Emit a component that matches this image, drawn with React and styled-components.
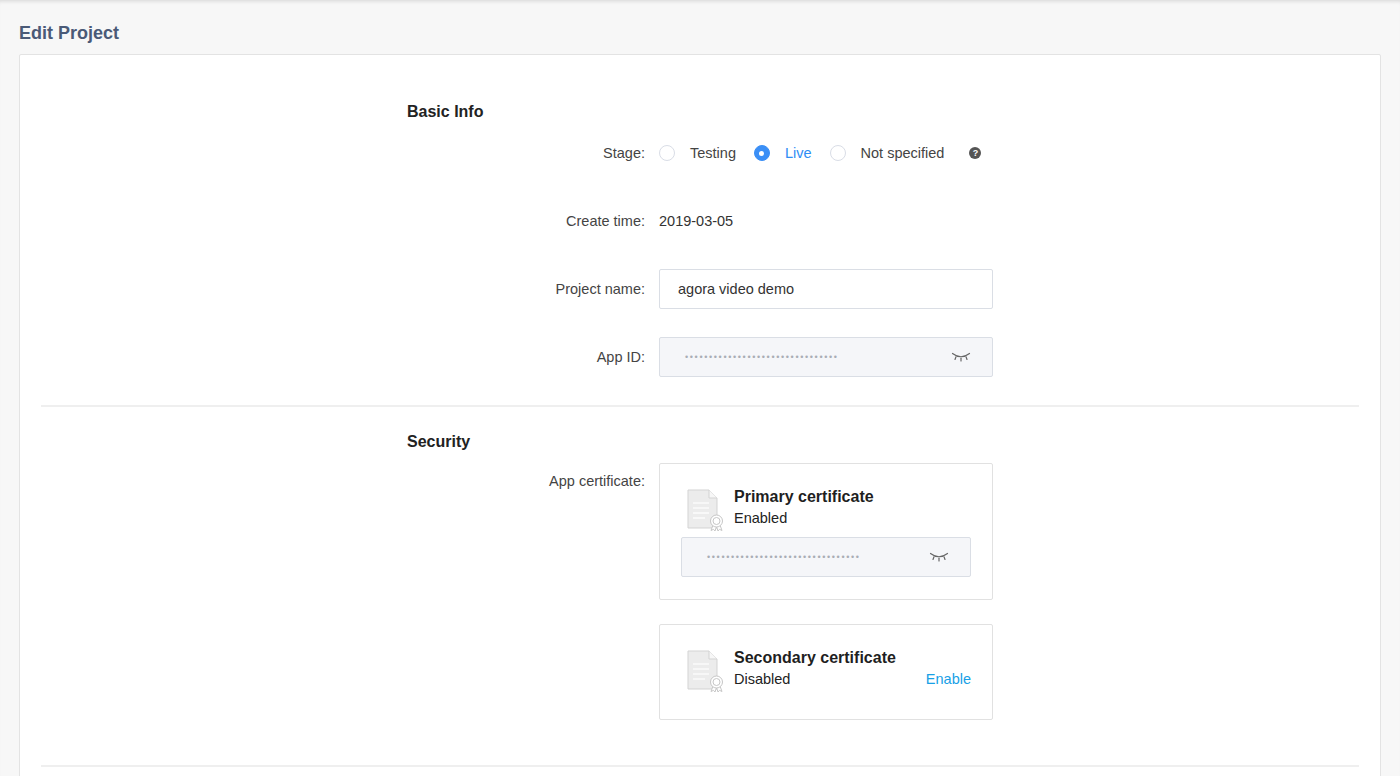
import React from 'react';
import styled, { createGlobalStyle } from 'styled-components';

const GlobalStyle = createGlobalStyle`
  html, body {
    margin: 0;
    padding: 0;
    background: #f7f7f7;
    font-family: "Liberation Sans", Arial, Helvetica, sans-serif;
  }
  * { box-sizing: border-box; }
`;

const Page = styled.div`
  height: 776px;
  overflow: hidden;
  padding: 21px 19px 0;
  background: #f7f7f7;
  box-shadow: inset 0 4px 4px -3px rgba(0, 0, 0, 0.14);
`;

const Title = styled.h1`
  margin: 0 0 9px;
  font-size: 18px;
  line-height: 24px;
  font-weight: 700;
  color: #4a5a77;
`;

const Card = styled.div`
  background: #fff;
  border: 1px solid #e3e3e3;
  border-radius: 2px;
  padding: 0 21px 40px;
  min-height: 760px;
`;

const Section = styled.section`
  padding: ${(p) => p.$top}px 0 ${(p) => p.$bottom}px;
  border-bottom: 2px solid #efefef;
`;

const Form = styled.div`
  width: 586px;
  margin: 0 auto;
`;

const Heading = styled.h2`
  margin: 0 0 9px;
  font-size: 16px;
  line-height: 24px;
  font-weight: 700;
  color: #222;
`;

const Row = styled.div`
  display: flex;
  align-items: ${(p) => (p.$top ? 'flex-start' : 'center')};
  min-height: 40px;
  & + & {
    margin-top: 28px;
  }
`;

const Label = styled.div`
  width: 252px;
  padding-right: 14px;
  text-align: right;
  font-size: 14.5px;
  line-height: ${(p) => (p.$top ? '36px' : '20px')};
  color: #444;
  flex-shrink: 0;
`;

const Value = styled.div`
  width: 334px;
  font-size: 14.5px;
  color: #333;
`;

const RadioGroup = styled.div`
  display: flex;
  align-items: center;
`;

const RadioOption = styled.label`
  display: flex;
  align-items: center;
  gap: 15px;
  margin-right: 18px;
  font-size: 14.5px;
  color: ${(p) => (p.$checked ? '#2f8df5' : '#444')};
  &:last-child { margin-right: 0; }
`;

const RadioDot = styled.span`
  width: 16px;
  height: 16px;
  border-radius: 50%;
  border: 1px solid ${(p) => (p.$checked ? '#3b8ff6' : '#d9dde6')};
  background: ${(p) => (p.$checked ? '#3b8ff6' : '#fff')};
  display: flex;
  align-items: center;
  justify-content: center;
  &::after {
    content: '';
    width: 5px;
    height: 5px;
    border-radius: 50%;
    background: #fff;
    display: ${(p) => (p.$checked ? 'block' : 'none')};
  }
`;

const Help = styled.span`
  width: 12px;
  height: 12px;
  margin-left: 7px;
  border-radius: 50%;
  background: #555;
  color: #fff;
  font-size: 9px;
  font-weight: 700;
  line-height: 12px;
  text-align: center;
`;

const Input = styled.div`
  height: 40px;
  display: flex;
  align-items: center;
  justify-content: space-between;
  padding: 0 21px 0 ${(p) => (p.$readonly ? 25 : 18)}px;
  border: 1px solid #dadee5;
  border-radius: 2px;
  background: ${(p) => (p.$readonly ? '#f5f6f9' : '#fff')};
  font-size: 14.5px;
  color: #333;
`;

const Dots = styled.span`
  font-size: 9px;
  letter-spacing: 1.65px;
  color: #a9adb5;
`;

const CertList = styled.div`
  display: flex;
  flex-direction: column;
  gap: 24px;
`;

const CertCard = styled.div`
  border: 1px solid #e1e1e1;
  border-radius: 2px;
  padding: 22px 21px ${(p) => p.$pb}px;
`;

const CertHeader = styled.div`
  display: flex;
  align-items: flex-start;
  height: 46px;
  margin-bottom: ${(p) => p.$mb}px;
`;

const CertIcon = styled.svg`
  width: 36px;
  height: 42px;
  margin: 3px 11px 0 6px;
  flex-shrink: 0;
`;

const CertText = styled.div`
  flex: 1;
`;

const CertTitle = styled.div`
  font-size: 16px;
  line-height: 22px;
  font-weight: 700;
  color: #1f1f1f;
`;

const CertStatus = styled.div`
  display: flex;
  justify-content: space-between;
  font-size: 14.5px;
  line-height: 20px;
  color: #222;
`;

const EnableLink = styled.a`
  color: #18a0e6;
  text-decoration: none;
  cursor: pointer;
`;

const EyeClosed = () => (
  <svg width="20" height="10" viewBox="0 0 20 10" fill="none" stroke="#666" strokeWidth="1.2" strokeLinecap="round">
    <path d="M1.5 1.5 Q10 8 18.5 1.5" />
    <path d="M5 4.8 L4 7.5" />
    <path d="M10 6.2 L10 9" />
    <path d="M15 4.8 L16 7.5" />
  </svg>
);

const Certificate = () => (
  <CertIcon viewBox="0 0 36 42">
    <path d="M1 1 H22 L30 9 V39 H1 Z" fill="#ececec" stroke="#d3d3d3" />
    <path d="M22 1 V9 H30" fill="#f7f7f7" stroke="#d3d3d3" />
    <g stroke="#fbfbfb" strokeWidth="1.6">
      <path d="M6 14 H22" />
      <path d="M6 19 H22" />
      <path d="M6 24 H22" />
      <path d="M6 29 H18" />
    </g>
    <path d="M26 36 L24 41.5 L26.5 40.3 L28 42 L29.5 37.5 L31 42 L32.5 40.3 L35 41.5 L33 36" fill="#fff" stroke="#c6c6c6" />
    <circle cx="29.5" cy="32" r="6" fill="#fff" stroke="#c6c6c6" />
    <circle cx="29.5" cy="32" r="3.5" fill="none" stroke="#c6c6c6" />
  </CertIcon>
);

const MASK = '••••••••••••••••••••••••••••••••';

const stages = [
  { key: 'testing', label: 'Testing' },
  { key: 'live', label: 'Live' },
  { key: 'none', label: 'Not specified' },
];

export default function App() {
  const stage = 'live';

  return (
    <>
      <GlobalStyle />
      <Page>
        <Title>Edit Project</Title>
        <Card>
          <Section $top={45} $bottom={28}>
            <Form>
              <Heading>Basic Info</Heading>
              <Row>
                <Label>Stage:</Label>
                <Value>
                  <RadioGroup>
                    {stages.map((s) => (
                      <RadioOption key={s.key} $checked={s.key === stage}>
                        <RadioDot $checked={s.key === stage} />
                        {s.label}
                      </RadioOption>
                    ))}
                    <Help>?</Help>
                  </RadioGroup>
                </Value>
              </Row>
              <Row>
                <Label>Create time:</Label>
                <Value>2019-03-05</Value>
              </Row>
              <Row>
                <Label>Project name:</Label>
                <Value>
                  <Input>agora video demo</Input>
                </Value>
              </Row>
              <Row>
                <Label>App ID:</Label>
                <Value>
                  <Input $readonly>
                    <Dots>{MASK}</Dots>
                    <EyeClosed />
                  </Input>
                </Value>
              </Row>
            </Form>
          </Section>
          <Section $top={23} $bottom={45}>
            <Form>
              <Heading>Security</Heading>
              <Row $top>
                <Label $top>App certificate:</Label>
                <Value>
                  <CertList>
                    <CertCard $pb={22}>
                      <CertHeader $mb={5}>
                        <Certificate />
                        <CertText>
                          <CertTitle>Primary certificate</CertTitle>
                          <CertStatus>Enabled</CertStatus>
                        </CertText>
                      </CertHeader>
                      <Input $readonly>
                        <Dots>{MASK}</Dots>
                        <EyeClosed />
                      </Input>
                    </CertCard>
                    <CertCard $pb={26}>
                      <CertHeader $mb={0}>
                        <Certificate />
                        <CertText>
                          <CertTitle>Secondary certificate</CertTitle>
                          <CertStatus>
                            Disabled
                            <EnableLink>Enable</EnableLink>
                          </CertStatus>
                        </CertText>
                      </CertHeader>
                    </CertCard>
                  </CertList>
                </Value>
              </Row>
            </Form>
          </Section>
        </Card>
      </Page>
    </>
  );
}
